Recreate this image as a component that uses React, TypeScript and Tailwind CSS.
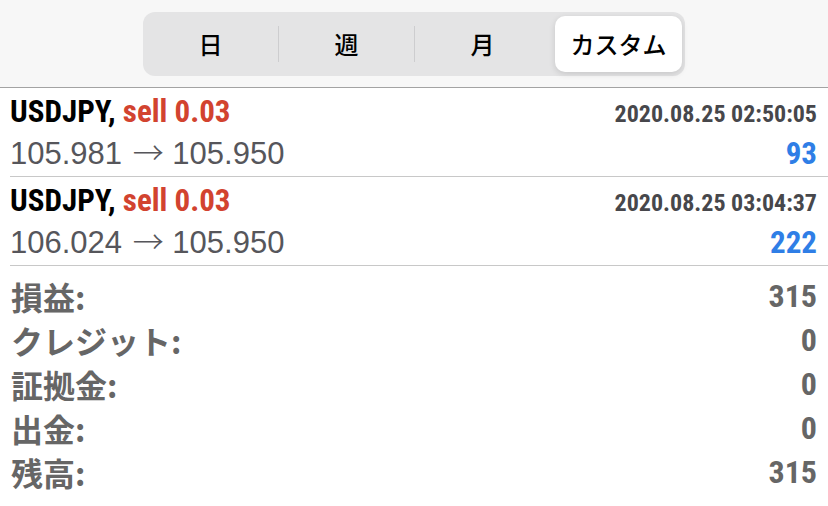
import React from 'react';

const tabs = ['日', '週', '月', 'カスタム'];

const trades = [
  { sym: 'USDJPY', side: 'sell 0.03', time: '2020.08.25 02:50:05', open: '105.981', close: '105.950', profit: '93' },
  { sym: 'USDJPY', side: 'sell 0.03', time: '2020.08.25 03:04:37', open: '106.024', close: '105.950', profit: '222' },
];

const summary = [
  ['損益:', '315'],
  ['クレジット:', '0'],
  ['証拠金:', '0'],
  ['出金:', '0'],
  ['残高:', '315'],
];

const cond = "font-['Roboto_Condensed','Noto_Sans_CJK_JP',sans-serif]";

export default function App() {
  return (
    <div className="w-[828px] h-[506px] bg-white overflow-hidden font-['Liberation_Sans','Noto_Sans_CJK_JP',sans-serif]">
      {/* period selector */}
      <div className="h-[88px] bg-[#f7f7f7] border-b border-[#a3a3a3] pt-[12px] pl-[143px]">
        <div className="w-[542px] h-[64px] bg-[#e4e4e5] rounded-[12px] flex items-center">
          {tabs.map((t, i) => (
            <React.Fragment key={t}>
              {i > 0 && i < 3 && <div className="w-px h-[36px] bg-[#cdcdcf]" />}
              <div className="flex-1 h-full flex">
                <div
                  className={`flex-1 flex items-center justify-center text-[24px] font-medium text-black font-['Noto_Sans_CJK_JP',sans-serif] ${
                    i === 3 ? 'my-[4px] ml-[5px] mr-[3px] bg-white rounded-[10px] shadow-[0_2px_6px_rgba(0,0,0,0.13)]' : ''
                  }`}
                >
                  {t}
                </div>
              </div>
            </React.Fragment>
          ))}
        </div>
      </div>

      {/* trades */}
      {trades.map((tr) => (
        <div key={tr.time} className="pl-[10px]">
          <div className="h-[89px] border-b border-[#c8c8c8] pr-[11px] pt-[6px]">
            <div className="flex items-baseline justify-between leading-[36px]">
              <div className={`${cond} font-bold text-[31px]`}>
                <span className="text-black">{tr.sym}, </span>
                <span className="text-[#d2432f]">{tr.side}</span>
              </div>
              <div className={`${cond} font-bold text-[24px] text-[#47474b]`}>{tr.time}</div>
            </div>
            <div className="flex items-baseline justify-between leading-[44px] -mt-[3px]">
              <div className="text-[31px] text-[#56565b]">
                {tr.open}{' '}
                <span className="font-['Noto_Sans_CJK_JP',sans-serif] font-light text-[31px] ml-[2px]">→</span>{' '}
                {tr.close}
              </div>
              <div className={`${cond} font-bold text-[31px] text-[#2f7ee6]`}>{tr.profit}</div>
            </div>
          </div>
        </div>
      ))}

      {/* summary */}
      <div className="px-[11px] pt-[8px]">
        {summary.map(([k, v]) => (
          <div key={k} className="flex items-center justify-between h-[44px] text-[#666666] font-bold">
            <div className="text-[32px] font-['Noto_Sans_CJK_JP',sans-serif]">{k}</div>
            <div className={`${cond} text-[32px]`}>{v}</div>
          </div>
        ))}
      </div>
    </div>
  );
}
